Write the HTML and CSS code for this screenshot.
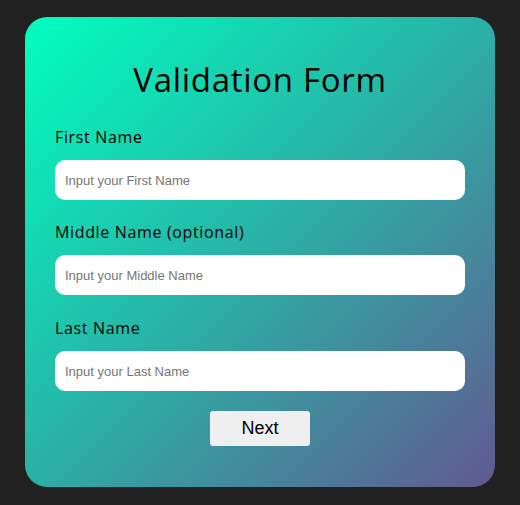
FILE: index.html
```html
<!DOCTYPE html>
<html lang="en">
<head>
<meta charset="utf-8">
<title>Validation Form</title>
<link rel="stylesheet" href="styles.css">
</head>
<body>
  <main class="page">
    <form class="card" onsubmit="return false">
      <h1 class="title">Validation Form</h1>
      <div class="fields">
        <div class="field">
          <label class="label" for="first">First Name</label>
          <input class="input" id="first" type="text" placeholder="Input your First Name">
        </div>
        <div class="field">
          <label class="label" for="middle">Middle Name (optional)</label>
          <input class="input" id="middle" type="text" placeholder="Input your Middle Name">
        </div>
        <div class="field field-last">
          <label class="label" for="last">Last Name</label>
          <input class="input" id="last" type="text" placeholder="Input your Last Name">
        </div>
      </div>
      <div class="actions">
        <button class="btn" type="submit">Next</button>
      </div>
    </form>
  </main>
</body>
</html>
```
FILE: styles.css
```css
* { box-sizing: border-box; }

html, body {
  margin: 0;
  padding: 0;
  background: #212121;
}

.page {
  display: flex;
  justify-content: center;
  padding-top: 17px;
  min-height: 505px;
}

.card {
  width: 470px;
  height: 470px;
  border-radius: 22px;
  background: linear-gradient(135deg, #00ffbf 0%, #26b8a8 45%, #625990 100%);
  padding: 40px 30px 0;
  display: flex;
  flex-direction: column;
  font-family: "Open Sans", "DejaVu Sans", sans-serif;
  color: #000;
}

.title {
  margin: 0;
  font-size: 33px;
  line-height: 46px;
  font-weight: 400;
  text-align: center;
  letter-spacing: 0.7px;
}

.fields {
  display: flex;
  flex-direction: column;
  gap: 20px;
  margin-top: 22px;
}

.field-last { margin-top: 1px; }

.field {
  display: flex;
  flex-direction: column;
  gap: 11px;
}

.label {
  font-size: 16px;
  line-height: 24px;
  letter-spacing: 0.65px;
}

.input {
  width: 100%;
  height: 40px;
  border: none;
  border-radius: 10px;
  background: #fff;
  padding: 0 10px;
  font-family: "Liberation Sans", Arial, sans-serif;
  font-size: 13px;
  outline: none;
}

.input::placeholder { color: #757575; }

.actions {
  display: flex;
  justify-content: center;
  margin-top: 20px;
}

.btn {
  width: 100px;
  height: 35px;
  border: none;
  border-radius: 3px;
  background: #efefef;
  font-family: "Liberation Sans", Arial, sans-serif;
  font-size: 18px;
  color: #000;
  padding: 0;
}
```
